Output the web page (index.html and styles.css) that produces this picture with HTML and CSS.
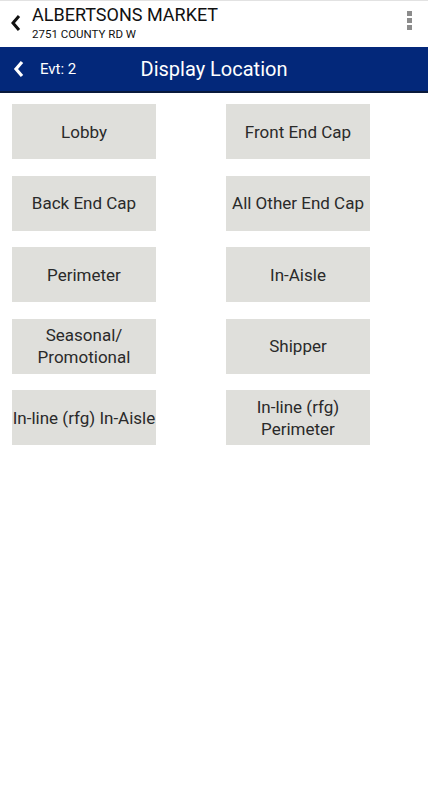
FILE: index.html
```html
<!DOCTYPE html>
<html lang="en">
<head>
    <meta charset="UTF-8">
    <meta name="viewport" content="width=device-width, initial-scale=1.0">
    <title>Display Location</title>
    <link rel="stylesheet" href="styles.css">
</head>
<body>
    <div class="store-bar">
        <svg class="store-back" width="12" height="16" viewBox="0 0 12 16">
            <path d="M9 1 L3 8 L9 15" fill="none" stroke="#111" stroke-width="3"/>
        </svg>
        <div class="store-info">
            <div class="store-name">ALBERTSONS MARKET</div>
            <div class="store-addr">2751 COUNTY RD W</div>
        </div>
        <div class="menu-dots">
            <span></span><span></span><span></span>
        </div>
    </div>

    <div class="title-bar">
        <svg class="title-back" width="12" height="18" viewBox="0 0 12 18">
            <path d="M9 2 L3 9 L9 16" fill="none" stroke="#fff" stroke-width="3.2"/>
        </svg>
        <span class="evt">Evt: 2</span>
        <h1>Display Location</h1>
    </div>

    <div class="grid">
        <button class="loc-btn">Lobby</button>
        <button class="loc-btn">Front End Cap</button>
        <button class="loc-btn">Back End Cap</button>
        <button class="loc-btn">All Other End Cap</button>
        <button class="loc-btn">Perimeter</button>
        <button class="loc-btn">In-Aisle</button>
        <button class="loc-btn">Seasonal/<br>Promotional</button>
        <button class="loc-btn">Shipper</button>
        <button class="loc-btn">In-line (rfg) In-Aisle</button>
        <button class="loc-btn">In-line (rfg)<br>Perimeter</button>
    </div>
</body>
</html>
```

FILE: styles.css
```css
body {
    margin: 0;
    padding: 0;
    background-color: #fff;
    font-family: Roboto, "Liberation Sans", sans-serif;
}
.store-bar {
    border-top: 1px solid #e2e2e2;
    display: flex;
    align-items: center;
    padding: 0 10px;
    box-sizing: border-box;
    height: 47px;
}
.store-back {
    margin-right: 10px;
    margin-top: -2px;
}
.store-info {
    flex: 1;
    margin-top: -2px;
}
.store-name {
    font-size: 18px;
    color: #111;
    line-height: 20px;
}
.store-addr {
    font-size: 11.5px;
    color: #111;
    line-height: 14px;
    margin-top: 2px;
}
.menu-dots {
    display: flex;
    flex-direction: column;
    gap: 2px;
    margin-right: 6px;
    margin-top: -8px;
}
.menu-dots span {
    width: 5px;
    height: 5px;
    background-color: #8c8c8c;
}
.title-bar {
    background-color: #03287a;
    height: 44px;
    border-bottom: 2px solid #0a1a3c;
    display: flex;
    align-items: center;
    color: white;
    position: relative;
}
.title-back {
    margin-left: 13px;
    margin-right: 15px;
}
.evt {
    font-size: 15px;
}
.title-bar h1 {
    position: absolute;
    left: 0;
    right: 0;
    margin: 0;
    text-align: center;
    font-size: 20px;
    font-weight: normal;
    pointer-events: none;
}
.grid {
    display: grid;
    grid-template-columns: 144px 144px;
    column-gap: 70px;
    row-gap: 16.5px;
    padding: 11px 12px;
}
.loc-btn {
    height: 55px;
    background-color: #dfdfdb;
    border: none;
    padding: 0;
    font-family: Roboto, "Liberation Sans", sans-serif;
    font-size: 17px;
    line-height: 22px;
    color: #2a2a2a;
    white-space: nowrap;
    overflow: hidden;
    cursor: pointer;
}
```
